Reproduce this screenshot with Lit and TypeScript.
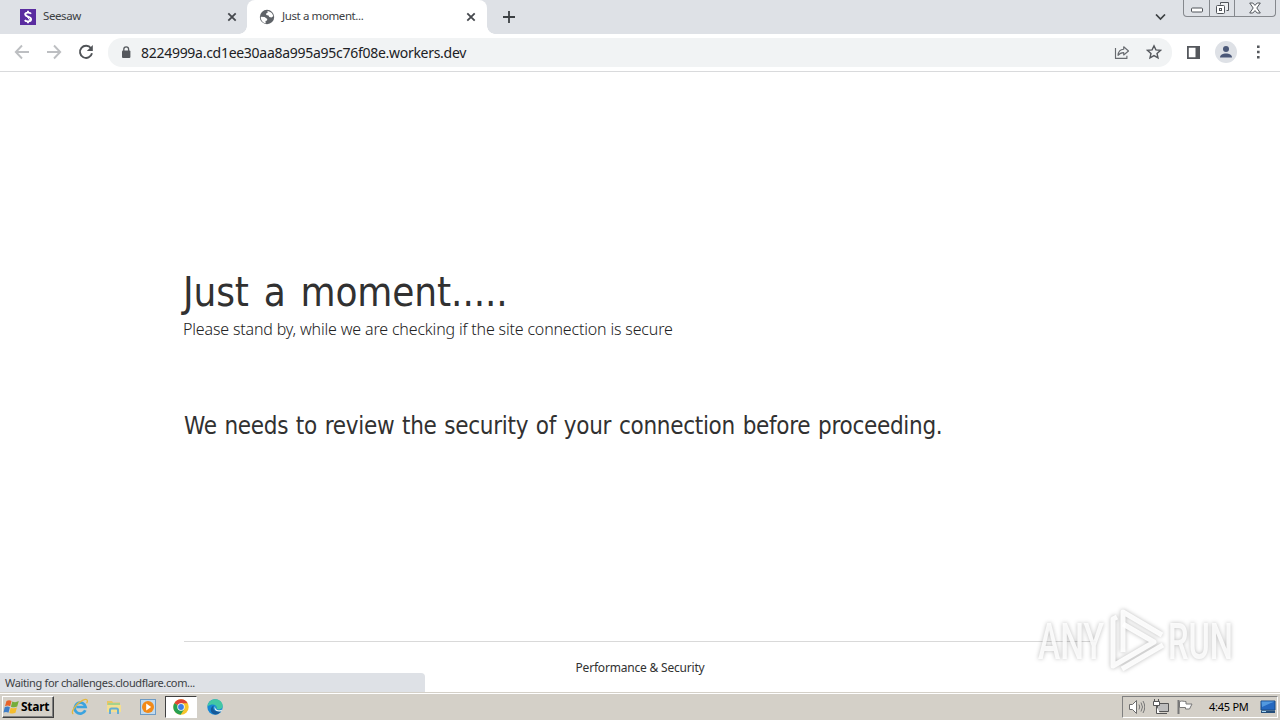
import { LitElement, html, css, svg } from 'lit';
import { customElement, property } from 'lit/decorators.js';

const crossIcon = svg`<svg class="close" width="10" height="10" viewBox="0 0 10 10">
  <path d="M1.3 1.3 8.7 8.7M8.7 1.3 1.3 8.7" stroke="#45484d" stroke-width="1.8" fill="none" />
</svg>`;

const seesawIcon = svg`<svg width="16" height="16" viewBox="0 0 16 16">
  <rect width="16" height="16" fill="#5a2ca0" />
  <path d="M11 4.7C10.2 3.2 5.2 3 5.2 5.5c0 2.4 5.9 1.7 5.9 4.7 0 2.7-5 2.8-6.3.9M8 1.8v2M8 12v2.2" stroke="#fff" stroke-width="1.9" fill="none" />
  <path d="M6 7.3 10.6 9M5 4.5l5 7" stroke="#fff" stroke-width="1" />
</svg>`;

const globeIcon = svg`<svg width="16" height="16" viewBox="0 0 16 16">
  <circle cx="8" cy="8" r="7.2" fill="#5f6368" />
  <path d="M1.8 7.8 5.6 8l2.7 1.9-.3 1.6-1.5.6.2 2.1C3.5 13.8 1.6 11 1.8 7.8ZM8.3 2.3c3.300-.1 5.600 2.400 5.900 5l-1.800 1.100-2.100-.4-.8-1.600-2.300-.5.1-1.700 1.400-.5Z" fill="#fff" />
</svg>`;

@customElement('browser-tab')
export class BrowserTab extends LitElement {
  @property() label = '';
  @property({ type: Boolean }) active = false;
  @property({ attribute: false }) icon: unknown;

  static styles = css`
    :host { display: block; height: 34px; }
    .tab {
      align-items: center;
      box-sizing: border-box;
      color: #3c4043;
      display: flex;
      font-size: 11.5px;
      height: 34px;
      padding: 0 10px 0 13px;
      position: relative;
    }
    .tab svg { display: block; flex: none; }
    .label { flex: 1; letter-spacing: -0.4px; line-height: 16px; margin-left: 7px; padding-bottom: 2px; white-space: pre; }
    .active { background: #fff; border-radius: 8px 8px 0 0; padding: 0 11px 0 12px; }
    .active::before, .active::after {
      bottom: 0;
      content: '';
      height: 8px;
      position: absolute;
      width: 8px;
    }
    .active::before { background: radial-gradient(circle at 0 0, transparent 7.5px, #fff 8px); left: -8px; }
    .active::after { background: radial-gradient(circle at 100% 0, transparent 7.5px, #fff 8px); right: -8px; }
  `;

  render() {
    return html`
      <div class="tab ${this.active ? 'active' : ''}">
        ${this.icon}
        <span class="label">${this.label}</span>
        ${crossIcon}
      </div>
    `;
  }
}

@customElement('browser-chrome')
export class BrowserChrome extends LitElement {
  static styles = css`
    :host { display: block; }
    svg { display: block; flex: none; }
    .strip { background: #dee1e6; display: flex; height: 34px; }
    .first { margin-left: 7px; width: 240px; }
    .second { width: 240px; }
    .plus { margin: 11px 0 0 16px; }
    .chevron { margin: 14px 17px 0 auto; }
    .window {
      border: 1px solid #85888d;
      border-radius: 0 0 4px 4px;
      border-top: 0;
      box-sizing: border-box;
      display: flex;
      height: 17px;
      margin-right: 4px;
      width: 93px;
    }
    .window span {
      align-items: center;
      border-left: 1px solid #85888d;
      box-sizing: border-box;
      display: flex;
      justify-content: center;
      width: 25px;
    }
    .window span:first-child { border-left: 0; }
    .window span:last-child { flex: 1; }
    .toolbar {
      align-items: center;
      background: #fff;
      border-bottom: 1px solid #d9dadc;
      box-sizing: border-box;
      display: flex;
      height: 38px;
      padding: 0 14px 0 14px;
    }
    .nav { display: flex; gap: 16px; margin: -1px 14px 0 0; }
    .address {
      align-items: center;
      background: #f1f3f4;
      border-radius: 14px;
      box-sizing: border-box;
      display: flex;
      height: 29px;
      padding: 0 10px 0 13px;
      width: 1064px;
    }
    .address svg { margin-top: -1px; }
    .url { color: #202124; flex: 1; font-size: 14px; letter-spacing: -0.28px; margin-left: 10px; }
    .address .share { margin-right: 16px; }
    .side { align-items: center; display: flex; flex: 1; justify-content: space-between; margin: -1px 0 0 14px; }
  `;

  render() {
    return html`
      <div class="strip">
        <browser-tab class="first" label="Seesaw" .icon=${seesawIcon}></browser-tab>
        <browser-tab class="second" label="Just a moment..." active .icon=${globeIcon}></browser-tab>
        <svg class="plus" width="12" height="12" viewBox="0 0 12 12"><path d="M6 0v12M0 6h12" stroke="#3c4043" stroke-width="1.8" /></svg>
        <svg class="chevron" width="11" height="7" viewBox="0 0 11 7"><path d="m1 .5 4.500 4.500L10 .5" fill="none" stroke="#3c4043" stroke-width="1.7" /></svg>
        <div class="window">
          <span><svg width="12" height="14" viewBox="0 0 12 14"><rect x=".5" y="7" width="11" height="4" rx="1" fill="#fff" stroke="#50545a" /></svg></span>
          <span><svg width="13" height="14" viewBox="0 0 13 14"><path d="M4.500 3.500V1.500h8v8h-2" fill="#eef0f2" stroke="#50545a" /><rect x=".5" y="4.500" width="8" height="8" rx="1" fill="#fff" stroke="#50545a" /><rect x="3.500" y="7.500" width="2" height="2" fill="#fff" stroke="#50545a" /></svg></span>
          <span><svg width="12" height="12" viewBox="0 0 12 12"><path d="M.7 1h3.100L6 3.400 8.200 1h3.100L7.800 6l3.500 5H8.200L6 8.600 3.800 11H.7l3.500-5Z" fill="#fff" stroke="#50545a" /></svg></span>
        </div>
      </div>
      <div class="toolbar">
        <div class="nav">
          <svg width="16" height="16" viewBox="0 0 16 16"><path d="M15 8H2M8 1.500 1.800 8 8 14.500" fill="none" stroke="#bdbfc2" stroke-width="1.9" /></svg>
          <svg width="16" height="16" viewBox="0 0 16 16"><path d="M1 8h13M8 1.500 14.200 8 8 14.500" fill="none" stroke="#bdbfc2" stroke-width="1.9" /></svg>
          <svg width="16" height="16" viewBox="0 0 16 16"><path d="M13 4.200A6.100 6.100 0 1 0 14 9.300" fill="none" stroke="#505357" stroke-width="1.9" /><path d="M14.800 1v6H8.800Z" fill="#505357" /></svg>
        </div>
        <div class="address">
          <svg width="10" height="13" viewBox="0 0 10 13"><rect x="1" y="4.500" width="8.400" height="7.500" rx="1" fill="#55585d" /><path d="M2.800 5V3.200a2.400 2.400 0 0 1 4.800 0V5" fill="none" stroke="#55585d" stroke-width="1.3" /></svg>
          <span class="url">8224999a.cd1ee30aa8a995a95c76f08e.workers.dev</span>
          <svg class="share" width="16" height="16" viewBox="0 0 16 16"><path d="M1.500 4v10.400h11.400v-2.600M4 11.400c.3-4 2.400-6 5.700-6.100V2.700L14.500 7l-4.800 4V8.600c-2.500 0-4.200.7-5.700 2.800Z" fill="none" stroke="#686b70" stroke-width="1.15" stroke-linejoin="round" /></svg>
          <svg width="16" height="16" viewBox="0 0 16 16"><path d="m8 1.800 1.900 4.100 4.500.5L11 9.500l1 4.400-4-2.300-4 2.300 1-4.400-3.400-3.100 4.500-.5Z" fill="none" stroke="#55585d" stroke-width="1.4" /></svg>
        </div>
        <div class="side">
          <svg width="15" height="15" viewBox="0 0 15 15"><path d="M1.900 1.900h11.200v11.200H1.900Z" fill="none" stroke="#55585d" stroke-width="1.8" /><path d="M9.500 1H14v13H9.500Z" fill="#55585d" /></svg>
          <svg width="22" height="22" viewBox="0 0 22 22"><circle cx="11" cy="11" r="11" fill="#dee1e6" /><circle cx="11" cy="8" r="3" fill="#4b5878" /><path d="M5 16.500c0-5.300 12-5.300 12 0Z" fill="#4b5878" /></svg>
          <svg width="16" height="16" viewBox="0 0 16 16"><path d="M7 1.500h2.600v2.600H7zM7 6.700h2.600v2.600H7zM7 11.900h2.600v2.600H7z" fill="#55585d" /></svg>
        </div>
      </div>
    `;
  }
}

@customElement('task-bar')
export class TaskBar extends LitElement {
  static styles = css`
    :host { display: block; }
    svg { display: block; flex: none; }
    .bar {
      align-items: center;
      background: #d4d0c8;
      border-top: 1px solid #d4d0c8;
      box-shadow: inset 0 1px #fff;
      box-sizing: border-box;
      display: flex;
      height: 28px;
      padding: 0 2px;
    }
    .start {
      align-items: center;
      background: #d4d0c8;
      border: 1px solid;
      border-color: #fff #404040 #404040 #fff;
      box-shadow: inset -1px -1px #808080;
      box-sizing: border-box;
      color: #000;
      display: flex;
      font-size: 12px;
      font-weight: 700;
      height: 22px;
      letter-spacing: -0.25px;
      width: 52px;
    }
    .start svg { margin-right: 1px; }
    .apps { display: flex; margin-left: 9px; }
    .app { align-items: center; box-sizing: border-box; display: flex; height: 22px; justify-content: center; width: 34px; }
    .current {
      background: #fff;
      border: 1px solid;
      border-color: #404040 #fff #fff #404040;
      width: 32px;
    }
    .current + .app { margin-left: 1px; }
    .tray {
      align-items: center;
      border: 1px solid;
      border-color: #808080 #fff #fff #808080;
      box-sizing: border-box;
      color: #000;
      display: flex;
      font-size: 11px;
      height: 22px;
      margin-left: auto;
      padding: 0 0 0 6px;
      width: 156px;
    }
    .tray svg { margin-right: 8px; }
    .tray .flag { margin-right: 16px; }
    .clock { letter-spacing: -0.25px; white-space: nowrap; width: 51px; }
    .tray .desk { margin: 0; }
  `;

  render() {
    return html`
      <div class="bar">
        <div class="start">
          <svg width="17" height="16" viewBox="0 0 16 16">
            <path d="M3 2C5 .8 6.500 1 8 2L6.700 7.300C5 6.200 3.500 6.300 1.500 7.200Z" fill="#e8632a" />
            <path d="M8.800 2.500c2 .9 4 .9 6.500-.4l-1.600 5.500C11.500 8.700 9.500 8.500 7.400 7.700Z" fill="#76ad3b" />
            <path d="M1.200 8.200c2-.9 3.600-.8 5.200.1L5 13.700c-1.700-1-3.200-1-5-.1Z" fill="#3f7ec8" />
            <path d="M7.200 8.700c2 .8 4 .9 6.200-.1L12 13.800c-2.100 1-4 .9-6.200.1Z" fill="#f5bd2e" />
          </svg>
          <span>Start</span>
        </div>
        <div class="apps">
          <span class="app"><svg width="18" height="18" viewBox="0 0 18 18">
            <path d="M14.300 12.200A5.500 5.500 0 1 1 14.600 9H5.500" fill="none" stroke="#3ba3df" stroke-width="2.700" />
            <path d="M2.300 16C-1 14.500 5 5.500 11.500 2.300c5-2.500 5.600.2 4.100 3" fill="none" stroke="#e4b83d" stroke-width="1.300" />
          </svg></span>
          <span class="app"><svg width="16" height="16" viewBox="0 0 16 16">
            <path d="M1 2h5l1 1.500h7V13H1Z" fill="#e9c664" />
            <path d="M2 4h12v3H2Z" fill="#a6d28c" />
            <path d="M1 6h14v7H1Z" fill="#f4df91" />
            <path d="M4 15v-4q0-1.500 1.500-1.500h5Q12 9.500 12 11v4" fill="none" stroke="#62aed4" stroke-width="2" />
          </svg></span>
          <span class="app"><svg width="16" height="16" viewBox="0 0 16 16">
            <rect x=".5" y=".5" width="15" height="15" fill="#c1daee" stroke="#6d9bc5" />
            <circle cx="8" cy="8" r="6" fill="#f28a18" />
            <path d="m6.200 4.400 5 3.600-5 3.600Z" fill="#fff" />
          </svg></span>
          <span class="app current"><svg width="16" height="16" viewBox="0 0 16 16">
            <circle cx="8" cy="8" r="7.700" fill="#f7c52b" />
            <path d="M8 8 1.330 4.150A7.700 7.700 0 0 1 14.670 4.150H8Z" fill="#df4436" />
            <path d="M1.330 4.150A7.700 7.700 0 0 0 7.600 15.700L11.300 9.900 8 8Z" fill="#27a052" />
            <circle cx="8" cy="8" r="3.700" fill="#fff" />
            <circle cx="8" cy="8" r="2.900" fill="#3d7ee5" />
          </svg></span>
          <span class="app"><svg width="16" height="16" viewBox="0 0 16 16">
            <circle cx="8" cy="8" r="7.700" fill="#1687d5" />
            <path d="M.5 7.500C1.500-2.300 15.500-1.600 15.700 7c0 3.400-4.400 4.300-6.200 2.700C11 6.500 6 3.200.5 7.500Z" fill="#42c7a4" />
            <path d="M7 6.500c-2.500 3 .5 7.200 7 5.700-1.200 2-3.200 3.200-5.500 3.400C2.500 14.500 2.500 8 7 6.500Z" fill="#155999" />
            <path d="M8.500 6.500c-1 1-.5 3.500 1.800 4.500 2 .6 4 .2 5-.5l-.8 1.700c-6 1.500-8.500-2.700-6-5.700Z" fill="#eef6f4" />
          </svg></span>
        </div>
        <div class="tray">
          <svg width="16" height="16" viewBox="0 0 16 16">
            <path d="M.5 5.500h3l4-4v13l-4-4h-3Z" fill="#fff" stroke="#6c6c6c" />
            <path d="M10 5.500q1.500 2.500 0 5M12 3.500q3 4.500 0 9M14 2q3.500 6 0 12" fill="none" stroke="#777" />
          </svg>
          <svg width="16" height="16" viewBox="0 0 16 16">
            <path d="M4.500 4.500h11v8h-11ZM7 14.500h7" fill="#bdbdbd" stroke="#555" />
            <path d="M.5 2.500h6v4h-6ZM1.500 0v2M5.500 0v2M3.500 7v7.500H7" fill="#fff" stroke="#555" />
          </svg>
          <svg class="flag" width="16" height="16" viewBox="0 0 16 16">
            <path d="M1.500 1v14" stroke="#777" stroke-width="2" />
            <path d="M2.500 2.500c3-1 4 0 6.500 0V5h6l-2.500 5H8.500V8.500h-6Z" fill="#fff" stroke="#777" />
          </svg>
          <span class="clock">4:45 PM</span>
          <svg class="desk" width="16" height="16" viewBox="0 0 16 16">
            <path d="M1 2h14v9H1Z" fill="#2468c0" stroke="#174a86" />
            <path d="M1.500 2.500h13L2 8Z" fill="#5299df" />
            <path d="M1 11.500h14V14H1Z" fill="#244e7b" />
            <path d="M2 12.500h4" stroke="#a6d8f7" />
          </svg>
        </div>
      </div>
    `;
  }
}

@customElement('app-root')
export class AppRoot extends LitElement {
  static styles = css`
    :host {
      background: #fff;
      display: flex;
      flex-direction: column;
      font-family: 'Noto Sans', 'Open Sans', sans-serif;
      height: 720px;
      overflow: hidden;
      width: 1280px;
    }
    .page { box-sizing: border-box; color: #313131; flex: 1; padding: 194px 184px 0; position: relative; }
    h1, h2, p { margin: 0; white-space: nowrap; }
    h1, h2 { font-family: 'DejaVu Sans Condensed', 'DejaVu Sans', sans-serif; font-stretch: condensed; font-weight: 400; }
    h1 { font-size: 40px; letter-spacing: -0.1px; line-height: 52px; margin-left: -1px; word-spacing: 3.5px; }
    .wait { color: #222; font-size: 16px; font-weight: 300; letter-spacing: -0.165px; line-height: 22px; margin-left: -1px; }
    h2 { font-size: 24px; letter-spacing: -0.3px; line-height: 36px; margin-top: 68px; word-spacing: 1.2px; }
    footer {
      border-top: 1px solid #d9d9d9;
      font-size: 12px;
      letter-spacing: -0.2px;
      line-height: 18px;
      margin-top: 197px;
      padding-top: 17px;
      text-align: center;
    }
    .status {
      background: #dee1e6;
      border-radius: 0 4px 0 0;
      bottom: 0;
      box-sizing: border-box;
      color: #3c4043;
      font-size: 11px;
      height: 19px;
      left: 0;
      letter-spacing: -0.35px;
      line-height: 20px;
      padding-left: 5px;
      position: absolute;
      width: 425px;
    }
    .watermark {
      bottom: 12px;
      filter: drop-shadow(0 0 2px rgba(0, 0, 0, 0.3));
      overflow: visible;
      position: absolute;
      right: 40px;
    }
    .watermark text { fill: #fff; fill-opacity: 0.85; font-family: Roboto, sans-serif; font-size: 50px; font-weight: 500; }
  `;

  render() {
    return html`
      <browser-chrome></browser-chrome>
      <main class="page">
        <h1>Just a moment.....</h1>
        <p class="wait">Please stand by, while we are checking if the site connection is secure</p>
        <h2>We needs to review the security of your connection before proceeding.</h2>
        <footer>Performance &amp; Security</footer>
        <div class="status">Waiting for challenges.cloudflare.com...</div>
        <svg class="watermark" width="204" height="76" viewBox="0 0 204 76">
          <text x="2" y="55" textLength="66" lengthAdjust="spacingAndGlyphs">ANY</text>
          <text x="132" y="55" textLength="65" lengthAdjust="spacingAndGlyphs">RUN</text>
          <g fill="none" stroke="#fff" stroke-opacity=".9" stroke-width="5" stroke-linejoin="round">
            <path d="M87 48V8l39 23" />
            <path d="M81 13l-4 2v47l41-24-31-18" />
            <path d="M86 65l41-24" />
          </g>
        </svg>
      </main>
      <task-bar></task-bar>
    `;
  }
}
